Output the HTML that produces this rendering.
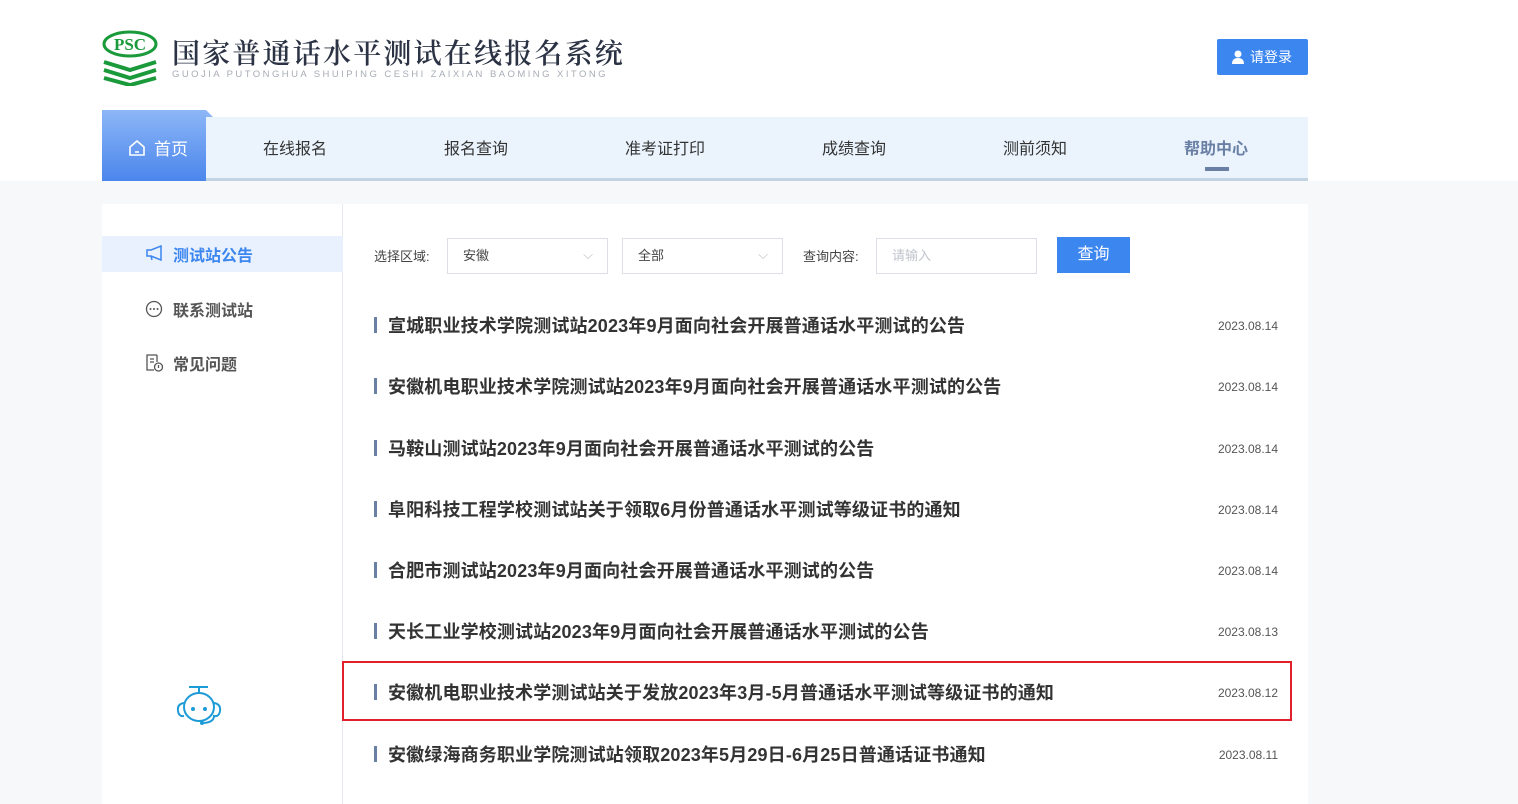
<!DOCTYPE html>
<html><head><meta charset="utf-8"><style>
*{margin:0;padding:0;box-sizing:border-box}
body{width:1518px;height:799px;overflow:hidden;background:#f7f8fa;font-family:"Liberation Sans","Noto Sans CJK SC",sans-serif;position:relative}
.top{position:absolute;left:0;top:0;width:1518px;height:181px;background:#fff}
.abs{position:absolute}
.title{left:172px;top:32px;font-size:28px;color:#2b3344;letter-spacing:2.2px;font-family:"Noto Serif CJK SC",serif;font-weight:600}
.sub{left:172px;top:69px;font-size:9.5px;color:#a8adb5;letter-spacing:2.45px}
.login{left:1217px;top:39px;width:91px;height:36px;background:#3c86f0;color:#fff;font-size:14px;line-height:36px;border-radius:2px;padding-left:33px}
.nav{left:102px;top:117px;width:1206px;height:64px;background:#ebf4fd;border-bottom:3px solid #c2d3e4}
.nav span{position:absolute;top:18px;font-size:16px;color:#333}
.home{left:102px;top:110px;width:104px;height:71px;background:linear-gradient(#8cb6f7,#4b86ec);color:#fff;font-size:17px}
.card{left:102px;top:204px;width:1206px;height:600px;background:#fff}
.side{left:102px;top:204px;width:241px;height:600px;border-right:1px solid #e5e8ee}
.si{position:absolute;left:173px;font-size:16px;font-weight:bold;color:#555}
.row{position:absolute;left:374px;width:904px;height:20px}
.row b{position:absolute;left:0;top:2px;width:3px;height:16px;background:#6a7fa4}
.row i{position:absolute;left:14px;top:-3px;font-style:normal;font-size:18px;font-weight:bold;color:#333;white-space:nowrap;letter-spacing:0.15px}
.row em{position:absolute;right:0;top:4px;font-style:normal;font-size:12px;color:#555}
.sel{position:absolute;top:238px;height:36px;border:1px solid #dcdfe6;font-size:13px;color:#444;line-height:34px;padding-left:15px}
.lab{position:absolute;top:246px;font-size:13px;color:#444}
</style></head><body>
<div class="top"></div>
<svg class="abs" style="left:102px;top:30px" width="57" height="56" viewBox="0 0 57 56">
<ellipse cx="28" cy="14" rx="26" ry="12" fill="none" stroke="#1a9a3a" stroke-width="3"/>
<text x="28" y="20" text-anchor="middle" font-family="Liberation Serif" font-weight="bold" font-size="17" fill="#1a9a3a">PSC</text>
<g stroke="#1a9a3a" stroke-width="4" fill="none"><path d="M2 32 L28 40 L54 32"/><path d="M2 40 L28 48 L54 40"/><path d="M2 48 L28 55 L54 48"/></g>
</svg>
<div class="abs title">国家普通话水平测试在线报名系统</div>
<div class="abs sub">GUOJIA PUTONGHUA SHUIPING CESHI ZAIXIAN BAOMING XITONG</div>
<div class="abs login"><svg class="abs" style="left:15px;top:11px" width="12" height="14"><circle cx="6" cy="4" r="3.5" fill="#fff"/><path d="M0 14 Q0 8 6 8 Q12 8 12 14Z" fill="#fff"/></svg>请登录</div>
<div class="abs nav">
<span style="left:161px">在线报名</span><span style="left:342px">报名查询</span><span style="left:523px">准考证打印</span><span style="left:720px">成绩查询</span><span style="left:901px">测前须知</span><span style="left:1082px;color:#6a7fa4;font-weight:bold">帮助中心</span>
<div class="abs" style="left:1103px;top:50px;width:24px;height:4px;background:#6a7fa4"></div>
</div>
<div class="abs home"><svg class="abs" style="left:26px;top:29px" width="18" height="18" viewBox="0 0 18 18"><path d="M2 8 L9 2 L16 8 V16 H2Z" fill="none" stroke="#fff" stroke-width="1.6"/><path d="M7 13 H11" stroke="#fff" stroke-width="1.6"/></svg><span class="abs" style="left:52px;top:25px">首页</span></div>
<div class="abs" style="left:206px;top:110px;width:0;height:0;border-left:7px solid #8cb6f7;border-top:7px solid transparent"></div>
<div class="abs card"></div>
<div class="abs side"></div>
<div class="abs" style="left:102px;top:236px;width:241px;height:36px;background:#e8f1fd"></div>
<svg class="abs" style="left:145px;top:245px" width="18" height="16"><path d="M2 5 H6 L16 1 V15 L6 11 H2Z M6 11 L7 15" fill="none" stroke="#3c86f0" stroke-width="1.5"/></svg>
<div class="si" style="top:242px;color:#3c86f0">测试站公告</div>
<svg class="abs" style="left:145px;top:300px" width="18" height="18"><circle cx="9" cy="9" r="7.5" fill="none" stroke="#555" stroke-width="1.3"/><circle cx="5.5" cy="9" r="1" fill="#555"/><circle cx="9" cy="9" r="1" fill="#555"/><circle cx="12.5" cy="9" r="1" fill="#555"/></svg>
<div class="si" style="top:297px">联系测试站</div>
<svg class="abs" style="left:146px;top:354px" width="18" height="18"><path d="M11 1 H1 V16 H8 M11 1 V8 M4 5 H8 M4 8 H8" fill="none" stroke="#555" stroke-width="1.3"/><circle cx="12.5" cy="13" r="4" fill="none" stroke="#555" stroke-width="1.3"/><path d="M12.5 11 V14" stroke="#555" stroke-width="1.3"/></svg>
<div class="si" style="top:351px">常见问题</div>
<svg class="abs" style="left:172px;top:684px" width="54" height="44" viewBox="0 0 54 44"><g fill="none" stroke="#1c9bd6" stroke-width="2"><path d="M17 3 H36 M27 3 V8"/><ellipse cx="27" cy="23" rx="15" ry="14"/><path d="M12 19 Q5 20 6 27 Q7 33 12 32 M42 19 Q49 20 48 27 Q47 33 42 32 Q42 38 32 39"/></g><circle cx="21" cy="25" r="2" fill="#1c9bd6"/><circle cx="33" cy="25" r="2" fill="#1c9bd6"/><circle cx="30" cy="39" r="2" fill="#1c9bd6"/></svg>
<div class="lab" style="left:374px">选择区域:</div>
<div class="sel" style="left:447px;width:161px">安徽<span class="abs" style="right:14px;top:-1px;color:#bbb">⌵</span></div>
<div class="sel" style="left:622px;width:161px">全部<span class="abs" style="right:14px;top:-1px;color:#bbb">⌵</span></div>
<div class="lab" style="left:803px">查询内容:</div>
<div class="sel" style="left:876px;width:161px;color:#c0c4cc">请输入</div>
<div class="abs" style="left:1057px;top:237px;width:73px;height:36px;background:#3c86f0;color:#fff;font-size:16px;text-align:center;line-height:36px">查询</div>
<div class="row" style="top:315px"><b></b><i>宣城职业技术学院测试站2023年9月面向社会开展普通话水平测试的公告</i><em>2023.08.14</em></div>
<div class="row" style="top:376px"><b></b><i>安徽机电职业技术学院测试站2023年9月面向社会开展普通话水平测试的公告</i><em>2023.08.14</em></div>
<div class="row" style="top:438px"><b></b><i>马鞍山测试站2023年9月面向社会开展普通话水平测试的公告</i><em>2023.08.14</em></div>
<div class="row" style="top:499px"><b></b><i>阜阳科技工程学校测试站关于领取6月份普通话水平测试等级证书的通知</i><em>2023.08.14</em></div>
<div class="row" style="top:560px"><b></b><i>合肥市测试站2023年9月面向社会开展普通话水平测试的公告</i><em>2023.08.14</em></div>
<div class="row" style="top:621px"><b></b><i>天长工业学校测试站2023年9月面向社会开展普通话水平测试的公告</i><em>2023.08.13</em></div>
<div class="row" style="top:682px"><b></b><i>安徽机电职业技术学测试站关于发放2023年3月-5月普通话水平测试等级证书的通知</i><em>2023.08.12</em></div>
<div class="row" style="top:744px"><b></b><i>安徽绿海商务职业学院测试站领取2023年5月29日-6月25日普通话证书通知</i><em>2023.08.11</em></div>
<div class="abs" style="left:342px;top:661px;width:950px;height:60px;border:2px solid #e0202a"></div>
</body></html>
